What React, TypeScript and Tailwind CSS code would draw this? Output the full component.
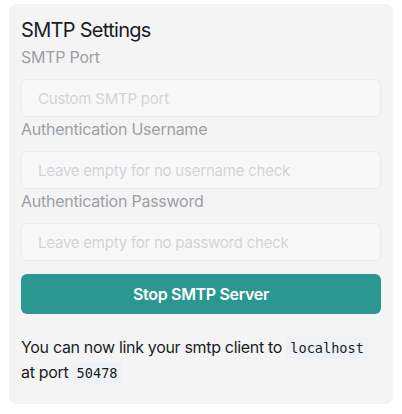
import React from 'react';

interface Field {
  label: string;
  placeholder: string;
}

export default function App() {
  const fields: Field[] = [
    { label: "SMTP Port", placeholder: "Custom SMTP port" },
    { label: "Authentication Username", placeholder: "Leave empty for no username check" },
    { label: "Authentication Password", placeholder: "Leave empty for no password check" },
  ];

  return (
    <div className="w-[402px] h-[414px] bg-white px-[9px] pt-1 font-['Inter',sans-serif]">
      <div className="bg-[#f4f4f5] rounded-lg px-3 pt-3 pb-[19px] flex flex-col">
        <h2 className="text-[20px] leading-[29px] tracking-[-0.035em] text-[#1b1d22]">SMTP Settings</h2>

        {/* Fields */}
        <div className="flex flex-col">
          {fields.map((field) => (
            <div key={field.label} className="flex flex-col">
              <label className="text-base leading-[24px] tracking-[-0.015em] text-[#9d9fa4]">{field.label}</label>
              <input
                type="text"
                placeholder={field.placeholder}
                className="mt-2.5 h-[38px] w-full px-4 rounded-md bg-[#f8f8f8] border border-[#ececee] text-[15px] tracking-[-0.015em] text-[#1b1d22] placeholder:text-[#d3d4d8] outline-none"
              />
            </div>
          ))}
        </div>

        <button className="mt-[13px] h-10 w-full rounded-md bg-[#2a9791] text-white text-base font-semibold tracking-[-0.02em] flex items-center justify-center">
          Stop SMTP Server
        </button>

        <p className="mt-[21px] text-base leading-[24px] tracking-[-0.02em] text-[#1b1d22]">
          You can now link your smtp client to{' '}
          <code className="font-['DejaVu_Sans_Mono',monospace] text-[13.6px] tracking-normal bg-[#eef1f5] px-1 py-[3px]">localhost</code>
          {' '}at port{' '}
          <code className="font-['DejaVu_Sans_Mono',monospace] text-[13.6px] tracking-normal bg-[#eef1f5] px-1 py-[3px]">50478</code>
        </p>
      </div>
    </div>
  );
}
